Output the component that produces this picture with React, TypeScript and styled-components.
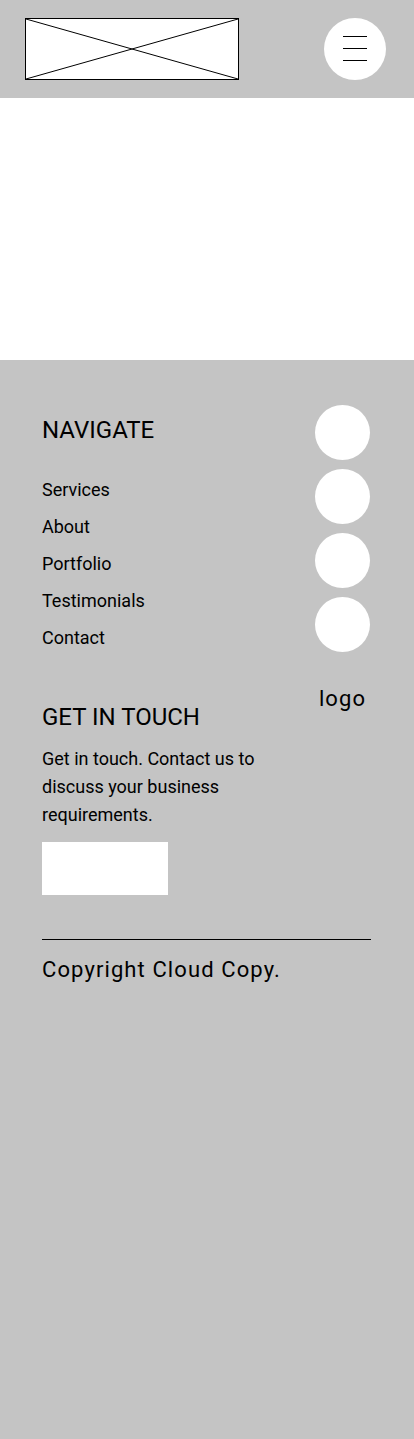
import * as React from 'react';
import styled, { createGlobalStyle } from 'styled-components';

const gray = '#c4c4c4';

const GlobalStyle = createGlobalStyle`
  html, body {
    margin: 0;
    padding: 0;
    background: #ffffff;
  }
  body {
    font-family: Roboto, 'Liberation Sans', Arial, sans-serif;
    color: #000000;
  }
  * {
    box-sizing: border-box;
  }
`;

const Page = styled.div`
  display: flex;
  flex-direction: column;
  min-height: 100vh;
  width: 100%;
`;

const Header = styled.header`
  display: flex;
  align-items: center;
  justify-content: space-between;
  height: 98px;
  padding: 0 28px 0 25px;
  background-color: ${gray};
`;

const LogoBox = styled.div`
  width: 214px;
  height: 62px;
  border: 1px solid #000;
  background-color: #fff;
  svg {
    display: block;
    width: 100%;
    height: 100%;
  }
`;

const MenuButton = styled.button`
  display: flex;
  flex-direction: column;
  align-items: center;
  justify-content: center;
  gap: 11px;
  width: 62px;
  height: 62px;
  padding: 0 0 2px;
  border: none;
  border-radius: 50%;
  background-color: #fff;
  cursor: pointer;
`;

const MenuLine = styled.span`
  display: block;
  width: 24px;
  height: 1px;
  background-color: #000;
`;

const Hero = styled.section`
  height: 262px;
  background-color: #fff;
`;

const Footer = styled.footer`
  flex: 1;
  background-color: ${gray};
  padding: 45px 43px 40px 42px;
`;

const FooterTop = styled.div`
  display: flex;
  justify-content: space-between;
  align-items: flex-start;
`;

const LeftColumn = styled.div`
  display: flex;
  flex-direction: column;
  align-items: flex-start;
  padding-top: 11px;
`;

const Heading = styled.h2<{ $gap?: number }>`
  margin: ${p => p.$gap ?? 0}px 0 0;
  font-size: 24px;
  line-height: 28px;
  font-weight: 400;
`;

const NavList = styled.ul`
  list-style: none;
  margin: 27px 0 0;
  padding: 0;
`;

const NavItem = styled.li`
  font-size: 18px;
  line-height: 37px;
`;

const Blurb = styled.p`
  margin: 14px 0 0;
  max-width: 250px;
  font-size: 18px;
  line-height: 28px;
`;

const ContactButton = styled.button`
  width: 126px;
  height: 53px;
  margin-top: 13px;
  border: none;
  background-color: #fff;
`;

const RightColumn = styled.div`
  display: flex;
  flex-direction: column;
  align-items: center;
  width: 57px;
`;

const Socials = styled.div`
  display: flex;
  flex-direction: column;
  gap: 9px;
`;

const SocialCircle = styled.span`
  display: block;
  width: 55px;
  height: 55px;
  border-radius: 50%;
  background-color: #fff;
`;

const LogoText = styled.div`
  margin-top: 34px;
  font-size: 22px;
  line-height: 26px;
  letter-spacing: 1.1px;
`;

const Divider = styled.hr`
  margin: 44px 0 0;
  border: none;
  border-top: 1px solid #000;
`;

const Copyright = styled.p`
  margin: 17px 0 0;
  font-size: 22px;
  line-height: 26px;
  letter-spacing: 1.1px;
`;

const navLinks = ['Services', 'About', 'Portfolio', 'Testimonials', 'Contact'];

export default function App() {
  return (
    <Page>
      <GlobalStyle />
      <Header>
        <LogoBox>
          <svg viewBox="0 0 212 60" preserveAspectRatio="none">
            <line x1="0" y1="0" x2="212" y2="60" stroke="#000" strokeWidth="1" />
            <line x1="0" y1="60" x2="212" y2="0" stroke="#000" strokeWidth="1" />
          </svg>
        </LogoBox>
        <MenuButton aria-label="Menu">
          <MenuLine />
          <MenuLine />
          <MenuLine />
        </MenuButton>
      </Header>

      <Hero />

      <Footer>
        <FooterTop>
          <LeftColumn>
            <Heading>NAVIGATE</Heading>
            <NavList>
              {navLinks.map(link => (
                <NavItem key={link}>{link}</NavItem>
              ))}
            </NavList>
            <Heading $gap={47}>GET IN TOUCH</Heading>
            <Blurb>Get in touch. Contact us to discuss your business requirements.</Blurb>
            <ContactButton aria-label="Contact" />
          </LeftColumn>
          <RightColumn>
            <Socials>
              <SocialCircle />
              <SocialCircle />
              <SocialCircle />
              <SocialCircle />
            </Socials>
            <LogoText>logo</LogoText>
          </RightColumn>
        </FooterTop>
        <Divider />
        <Copyright>Copyright Cloud Copy.</Copyright>
      </Footer>
    </Page>
  );
}
